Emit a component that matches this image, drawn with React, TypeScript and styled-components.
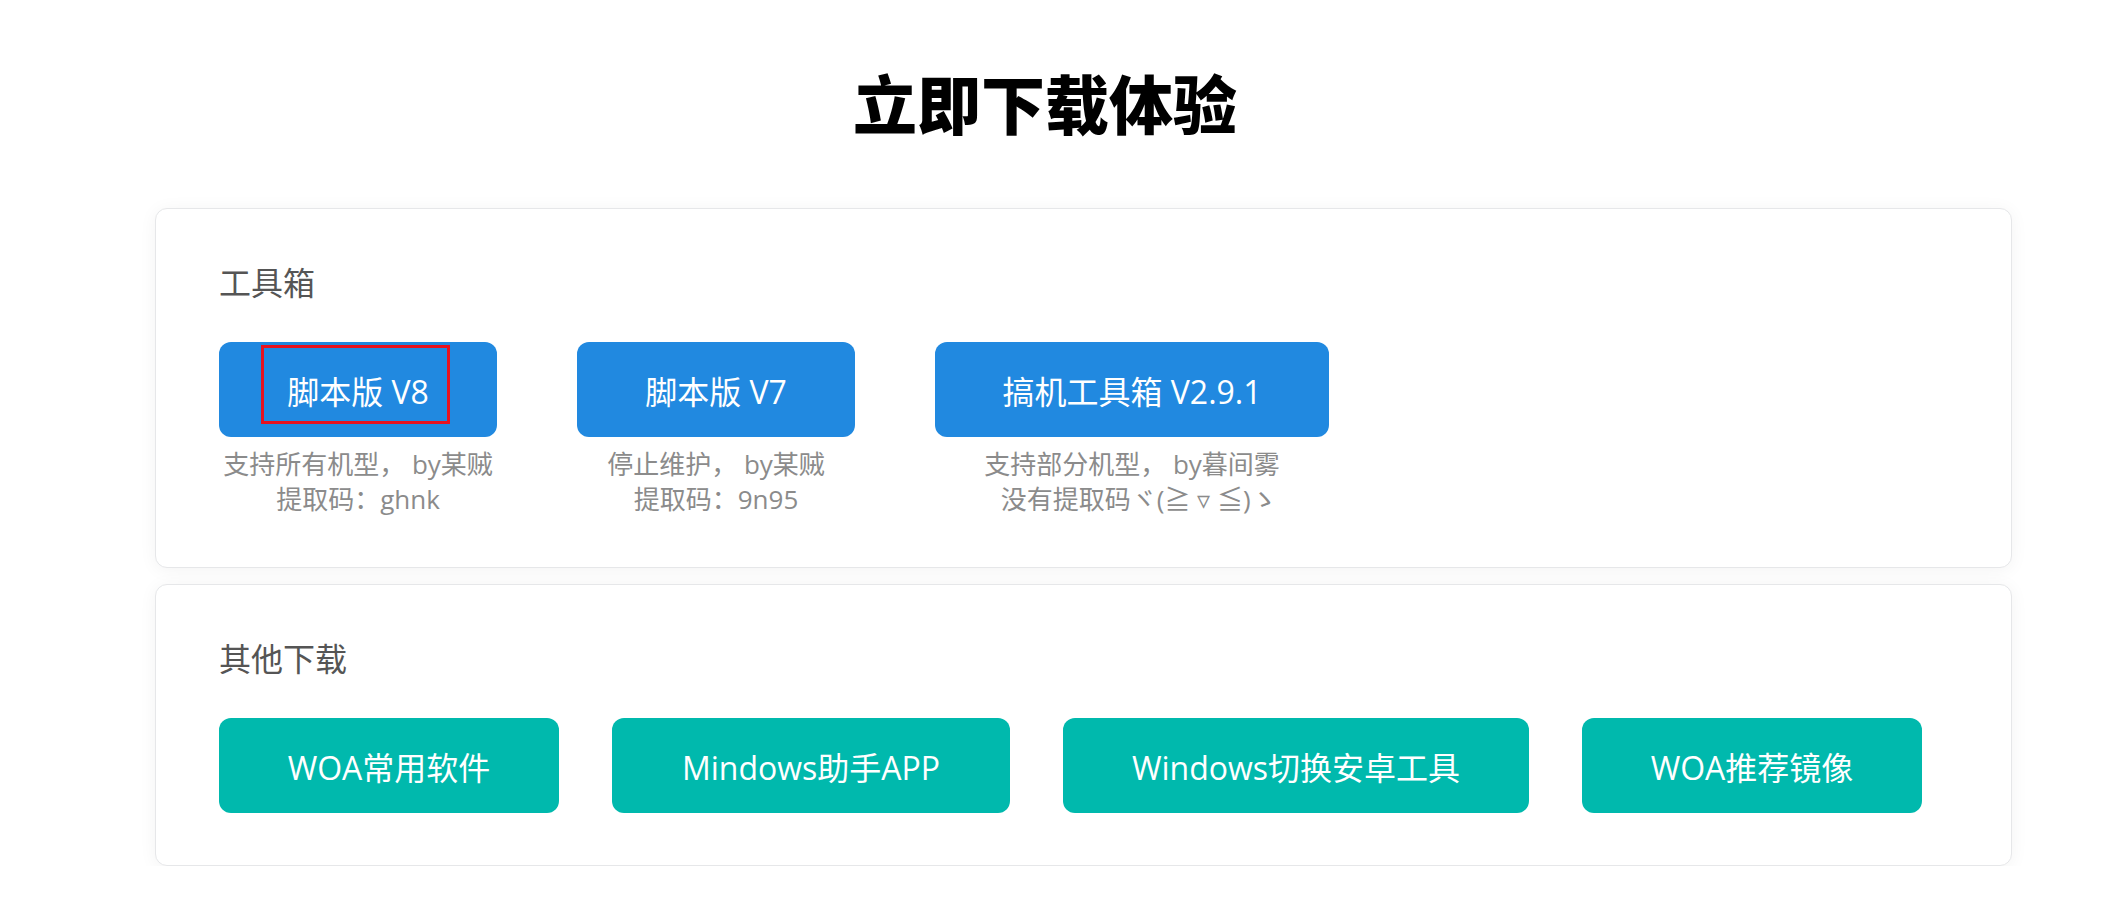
import React from "react";
import styled, { createGlobalStyle } from "styled-components";

const Global = createGlobalStyle`
  html, body { margin: 0; padding: 0; background: #ffffff; }
  body {
    font-family: "Open Sans", "Noto Sans CJK SC", sans-serif;
    -webkit-font-smoothing: antialiased;
  }
  * { box-sizing: border-box; }
`;

const Page = styled.main`
  width: 2108px;
  padding-top: 63px;
  display: flex;
  flex-direction: column;
`;

const Title = styled.h1`
  margin: 0 0 68px;
  padding-right: 18px;
  text-align: center;
  font-family: "Noto Sans CJK SC", sans-serif;
  font-weight: 900;
  font-size: 64px;
  line-height: 77px;
  color: #000;
`;

const Cards = styled.div`
  margin-left: 155px;
  width: 1857px;
  display: flex;
  flex-direction: column;
  gap: 16px;
`;

const Card = styled.section<{ $pb: number }>`
  background: #fff;
  border: 1px solid #e6e7e9;
  border-radius: 12px;
  box-shadow: 0 2px 18px rgba(0, 0, 0, 0.05);
  padding: 51px 63px ${(p) => p.$pb}px;
`;

const Label = styled.h2`
  margin: 0 0 40px;
  font-family: "Noto Sans CJK SC", sans-serif;
  font-weight: 400;
  font-size: 32px;
  line-height: 42px;
  color: #555;
`;

const Row = styled.div<{ $gap: number }>`
  display: flex;
  align-items: flex-start;
  gap: ${(p) => p.$gap}px;
`;

const Item = styled.div<{ $w: number }>`
  width: ${(p) => p.$w}px;
  display: flex;
  flex-direction: column;
  align-items: center;
`;

const Button = styled.a<{ $color: string; $w: number }>`
  position: relative;
  width: ${(p) => p.$w}px;
  height: 95px;
  border-radius: 12px;
  background: ${(p) => p.$color};
  color: #fff;
  display: flex;
  align-items: center;
  justify-content: center;
  font-size: 32px;
  line-height: 40px;
  text-decoration: none;
  white-space: nowrap;
  padding-top: 4px;
  cursor: pointer;
`;

const Highlight = styled.span`
  position: absolute;
  left: 42px;
  top: 3px;
  width: 189px;
  height: 79px;
  border: 3px solid #e8121f;
  pointer-events: none;
`;

const Caption = styled.p`
  margin: 10px 0 0;
  font-size: 26px;
  line-height: 35px;
  color: #8b8b8b;
  text-align: center;
  white-space: nowrap;
`;

const BLUE = "#2189e0";
const TEAL = "#00b9ad";

const tools = [
  { name: "脚本版 V8", w: 278, lines: ["支持所有机型， by某贼", "提取码：ghnk"], mark: true },
  { name: "脚本版 V7", w: 278, lines: ["停止维护， by某贼", "提取码：9n95"], mark: false },
  { name: "搞机工具箱 V2.9.1", w: 394, lines: ["支持部分机型， by暮间雾", "\u00a0\u00a0没有提取码ヾ(≧ ▿ ≦)ゝ"], mark: false },
];

const others = [
  { name: "WOA常用软件", w: 340 },
  { name: "Mindows助手APP", w: 398 },
  { name: "Windows切换安卓工具", w: 466 },
  { name: "WOA推荐镜像", w: 340 },
];

export default function App() {
  return (
    <>
      <Global />
      <Page>
        <Title>立即下载体验</Title>
        <Cards>
          <Card $pb={50}>
            <Label>工具箱</Label>
            <Row $gap={80}>
              {tools.map((t) => (
                <Item key={t.name} $w={t.w}>
                  <Button $color={BLUE} $w={t.w}>
                    {t.name}
                    {t.mark && <Highlight />}
                  </Button>
                  <Caption>
                    {t.lines[0]}
                    <br />
                    {t.lines[1]}
                  </Caption>
                </Item>
              ))}
            </Row>
          </Card>
          <Card $pb={52}>
            <Label>其他下载</Label>
            <Row $gap={53}>
              {others.map((o) => (
                <Button key={o.name} $color={TEAL} $w={o.w}>
                  {o.name}
                </Button>
              ))}
            </Row>
          </Card>
        </Cards>
      </Page>
    </>
  );
}
